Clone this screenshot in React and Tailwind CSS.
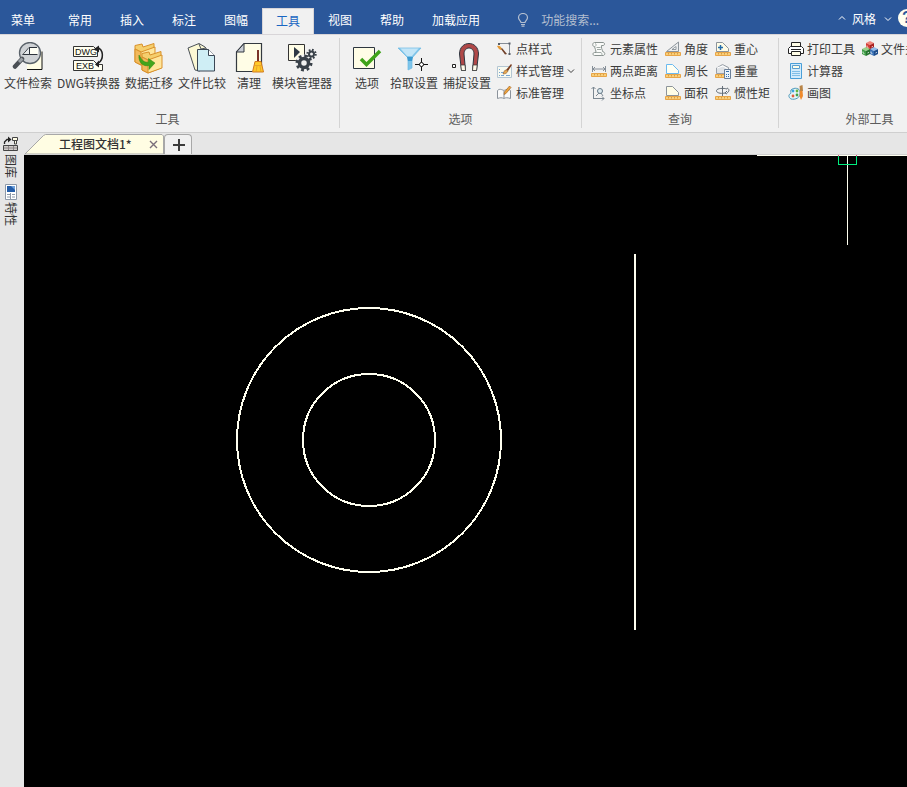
import React from "react";

/* ---------- large ribbon icons (32 x 32) ---------- */

function Icon32({ children }) {
  return (
    <svg width="32" height="32" viewBox="0 0 32 32" fill="none" aria-hidden="true">
      {children}
    </svg>
  );
}

const Folder = ({ x, y }) => (
  <g transform={`translate(${x} ${y})`}>
    <path d="M1 6 1 2.500 8 1 9 4 20 0.500 20 17 7 22 1 19Z" fill="#f5cf6d" stroke="#d9912b" />
    <path d="M1 6 7 9 21 4 21 17 7 22" fill="#ffe69b" stroke="#d9912b" />
    <path d="M1 6 7 9 7 22 1 19Z" fill="#f2b95c" stroke="#d9912b" />
  </g>
);

const SearchFile = () => (
  <Icon32>
    <path d="M15 9h15v18H15z" fill="#fffde6" />
    <path d="M30 9.500v18H15" stroke="#111" />
    <circle cx="18" cy="11" r="10.500" fill="#cfd2d5" stroke="#5a626a" strokeWidth="1.300" />
    <path d="M11 12.500 17 5.500h9v7Z" fill="#fffff5" />
    <path d="M10.500 12.500h15M11 12.500 17 5.500h8" stroke="#2d333b" />
    <path d="M17.500 5.500v7h-6" fill="#e6e9ec" stroke="#2d333b" />
    <path d="M10 17 3 24.500" stroke="#4a4f55" strokeWidth="4.500" strokeLinecap="round" />
    <path d="M10.500 16.500 7 20" stroke="#9ba0a6" strokeWidth="3" />
  </Icon32>
);

const Convert = () => (
  <Icon32>
    <path d="M1.500 4.500h20l4 4v6h-24zM1.500 18.500h20l4 4h5v6h-29z" fill="#fffff0" stroke="#333" />
    <text x="3" y="13" fontSize="9" fontFamily="Liberation Sans, sans-serif" fill="#111">DWG</text>
    <text x="4" y="27" fontSize="9" fontFamily="Liberation Sans, sans-serif" fill="#111">EXB</text>
    <path d="M25 5.500c7 2 7 12 1 16" stroke="#222" strokeWidth="1.500" />
    <path d="M22 7l5-3.500v7zM23 22.500l4-4v7z" fill="#222" />
  </Icon32>
);

const Migrate = () => (
  <Icon32>
    <Folder x={1} y={1} />
    <Folder x={8} y={9} />
    <path d="M6 13c-1 8 5 12 10 10.500v4l6-6.500-6.500-4.500v3.500c-4 1-7-2-9.500-7z" fill="#43a51b" stroke="#2f8410" strokeWidth=".5" />
  </Icon32>
);

const Compare = () => (
  <Icon32>
    <path d="M2 6 13 1.500 19 5l3 4-8 20-5-1Z" fill="#fbf8d4" stroke="#4a5158" />
    <path d="m13 2 2 5 5-1" stroke="#4a5158" />
    <path d="M11.500 7.500h11l6 6v15.500h-17z" fill="#cfeef5" stroke="#3b4654" />
    <path d="M22.500 7.500v6h6" fill="#fff" stroke="#3b4654" />
  </Icon32>
);

const Clean = () => (
  <Icon32>
    <path d="M3.500 10 11 1.500h17.500v28h-25Z" fill="#fffde6" stroke="#333940" strokeWidth="1.200" />
    <path d="M11 1.500V10H3.500Z" fill="#c8ccd4" stroke="#333940" />
    <path d="M25 8v12" stroke="#7a3329" strokeWidth="2" />
    <path d="M22 19.500h6l2.500 10.500h-11Z" fill="#ffc928" stroke="#d27a1c" />
    <path d="M21 23.500h8M24 24l-1 6M27 24l1 6" stroke="#e0962a" strokeWidth=".7" />
  </Icon32>
);

const Modules = () => (
  <Icon32>
    <path d="M2.500 2.500h16v16h-16z" fill="#fffde6" stroke="#333" />
    <path d="m8 5 6 5-6 6z" fill="#2f3944" />
    <circle cx="18" cy="21" r="8.500" fill="#f1f1f1" />
    <circle cx="18" cy="21" r="7" stroke="#394149" strokeWidth="3" strokeDasharray="2.750 2.750" />
    <circle cx="18" cy="21" r="4.500" stroke="#394149" strokeWidth="3.500" />
    <circle cx="25.500" cy="12" r="4.200" stroke="#394149" strokeWidth="2" strokeDasharray="1.650 1.650" />
    <circle cx="25.500" cy="12" r="2.500" fill="#f1f1f1" stroke="#394149" strokeWidth="2" />
  </Icon32>
);

const Options = () => (
  <Icon32>
    <path d="M2.500 5.500h21v21h-21z" fill="#fffde6" stroke="#2d3640" />
    <path d="m10 17 5.500 5.500L29 9" stroke="#3fa31a" strokeWidth="3.500" />
  </Icon32>
);

const Pick = () => (
  <Icon32>
    <path d="M0 6h23l-9 10v10l-4 2V16Z" fill="#7fc5ea" />
    <path d="M2 6h19l-7 8h-5Z" fill="#c3e5f7" />
    <path d="M0 6h23l-9 10v10l-4 2V16Z" stroke="#6bb9e4" strokeWidth=".7" />
    <path d="M9 15h6l-1 4h-4z" fill="#3c9ad0" />
    <path d="M23.500 16v5m0 3v5M17 22.500h5m3 0h5" stroke="#111" />
    <circle cx="23.500" cy="22.500" r="2" fill="#fff" stroke="#111" />
  </Icon32>
);

const Snap = () => (
  <Icon32>
    <path d="M1.500 22.500h3v3h-3z" fill="#fff" stroke="#222" />
    <path d="M10.500 28.500 8.500 12c0-14 19-14 19 0l-2 16.500h-4L23 12c0-8-10-8-10 0l1.500 16.500Z" fill="#b04848" stroke="#2d3640" />
    <path d="M9.800 23h4.200l.5 5.500h-4zM22 23h4.200l-.7 5.500h-4z" fill="#fff8e8" stroke="#333" strokeWidth=".7" />
  </Icon32>
);

/* ---------- small ribbon icons (16 x 16) ---------- */

function Icon16({ children }) {
  return (
    <svg className="shrink-0" width="16" height="16" viewBox="0 0 16 16" fill="none" aria-hidden="true">
      {children}
    </svg>
  );
}

const Ruler = ({ y = 12 }) => (
  <>
    <path d={`M.5 ${y + 0.5}h15v3H.5z`} fill="#f9cf7a" stroke="#e8a547" />
    <path d={`M3.500 ${y + 1}v1.500m3-1.500v1.500m3-1.500v1.500m3-1.500v1.500`} stroke="#cf9137" strokeWidth=".8" />
  </>
);

const Brush = () => (
  <>
    <path d="m14 1-5 6 2 1 4-6z" fill="#7b3f22" />
    <path d="M9 7c-2 0-2 2-3 4 3 0 4-1 5-3z" fill="#e8a84e" stroke="#80502a" strokeWidth=".5" />
  </>
);

const PointStyle = () => (
  <Icon16>
    <path d="M2 2.500h11M12.500 3v11" stroke="#858c96" />
    <path d="M1 2h2v2H1zM11.500 1.500h2v2h-2zM11.500 12h2v2h-2z" fill="#555d68" />
    <path d="M0 5c3-1 4 1 5 3L3.500 9C2 8 1 7 0 5Z" fill="#e69a35" />
    <path d="m4 8 1-1 5 6-2 .5z" fill="#71402a" />
  </Icon16>
);

const StyleManage = () => (
  <Icon16>
    <path d="M.5 3.500h14v11H.5z" fill="#f8faf0" stroke="#b4c6d3" />
    <path d="M2 6.500h1M2 9.500h1M2 12.500h1M4 9.500h3M4 12.500h3M9 12.500h4" stroke="#79a5d3" />
    <Brush />
  </Icon16>
);

const StandardManage = () => (
  <Icon16>
    <path d="M.5 5.500c2-2 4-1 6.500 0 2-1 4-2 6.500 0v8c-3-1-5-1-6.500 0-2-1-4-1-6.500 0Z" fill="#fafafa" stroke="#8b929b" />
    <path d="M7 6v7" stroke="#8b929b" />
    <path d="m12.500 1 1.500 1.500-5 6-2 1 .5-2.500Z" fill="#f0a53b" stroke="#9a5a1d" strokeWidth=".6" />
  </Icon16>
);

const Scroll = () => (
  <Icon16>
    <path d="M3.500 1.500h8.500c2 0 2 3 0 3h-1.500c-.5 2 .5 4 1.500 6.500h.500c2 .5 1.500 3.500-.5 3.500h-8.500c-2 0-2-3 0-3h1.500c0-2-1-4-1.500-6h-.500c-2-.5-1.500-4 .500-4Z" fill="#fafbf9" stroke="#89928f" />
    <path d="M3.500 5.500c2 0 2-3 .5-3M5 11.500h5c1.500 1 1 2 .5 3M5.500 6.500h4M6 8.500h4" stroke="#a1aaa6" />
  </Icon16>
);

const Distance = () => (
  <Icon16>
    <path d="M1.500 3v6m13-6v6M2 6h12M4 4 2 6l2 2m8-4 2 2-2 2" stroke="#7b858f" strokeWidth=".9" />
    <Ruler y={10} />
  </Icon16>
);

const Coordinate = () => (
  <Icon16>
    <path d="M2.500 14V2m-2 2 2-2 2 2M2 13.500h11m-2-2 2 2-2 2" stroke="#7b8791" />
    <path d="m5 11 4-4m1 1 2 3" stroke="#7b8791" />
    <circle cx="9" cy="6" r="2.500" fill="#dce9ef" stroke="#657886" />
  </Icon16>
);

const Angle = () => (
  <Icon16>
    <path d="M1.500 10.500 13.500 1v9.500Z" fill="#eceeef" stroke="#8c949b" />
    <path d="M7 8.500 11 5.500v3z" fill="#fff" stroke="#7c858d" strokeWidth=".8" />
    <Ruler y={11} />
  </Icon16>
);

const Perimeter = () => (
  <Icon16>
    <path d="M1.500 10.500v-9h6l6 6v3Z" fill="#fffff3" stroke="#6bbaf0" />
    <Ruler y={11} />
  </Icon16>
);

const Area = () => (
  <Icon16>
    <path d="M1.500 10.500v-9h6l6 6v3Z" fill="#fffde6" stroke="#8c949b" />
    <Ruler y={11} />
  </Icon16>
);

const Centroid = () => (
  <Icon16>
    <path d="M1.500 10.500v-9h6l6 6v3Z" fill="#fffde6" stroke="#8c949b" />
    <path d="M5.500 4v5M3 6.500h5" stroke="#246caa" strokeWidth="1.500" />
    <Ruler y={11} />
  </Icon16>
);

const Weight = () => (
  <Icon16>
    <path d="m1.500 5 6-3.500 6 3v6h-12Z" fill="#e0e3e6" stroke="#9aa1a8" />
    <path d="m2 5 6-2 5 3" stroke="#fff" />
    <Ruler y={11} />
    <path d="M9.500 6.500h6v9h-6z" fill="#eaf4fc" stroke="#6b7f98" />
    <path d="M11 8.500h3M11 11.500h1m1 0h1m-3 2h1m1 0h1" stroke="#3972ab" />
  </Icon16>
);

const Inertia = () => (
  <Icon16>
    <path d="M7.500 1v10" stroke="#69727b" />
    <path d="M10 8c-5 1-9-.5-8.500-2.500C2 3 9 3 12 4m-2 4 2-2m-2 2 2 1m0-6c3 1 2 4 0 5" stroke="#606a73" />
    <Ruler y={11} />
  </Icon16>
);

const Printer = () => (
  <Icon16>
    <path d="M3.500 6V1.500h9V6" fill="#fffde6" stroke="#222" />
    <path d="M2.500 5.500h11l2 2v5H.5v-5z" fill="#fff" stroke="#222" strokeLinejoin="round" />
    <path d="M3 8.500h10" stroke="#222" />
    <path d="M3.500 10.500h9v4h-9z" fill="#fffde6" stroke="#222" />
  </Icon16>
);

const Calculator = () => (
  <Icon16>
    <path d="M2.500.5h11v15h-11z" fill="#d2ebfc" stroke="#4a9fd8" />
    <path d="M4.500 2.500h7v3h-7z" fill="#fffde9" stroke="#5b9fce" />
    <path d="M4.500 8.500h7M4.500 10.500h7M4.500 12.500h7" stroke="#2f91d2" strokeDasharray="1 1" />
  </Icon16>
);

const Paint = () => (
  <Icon16>
    <path d="M3 5c3-3 9-2 9 2 1 6-5 8-9 7-2-1-3-4-1-5 2-1 0-2 1-4Z" fill="#e7f4f8" stroke="#4d99b9" />
    <circle cx="5" cy="6" r="1.400" fill="#3aa3e0" />
    <circle cx="9" cy="6" r="1.400" fill="#66b43d" />
    <circle cx="5" cy="11" r="1.400" fill="#e05c3c" />
    <circle cx="9" cy="10" r="1.400" fill="#3fa34d" />
    <path d="m11.500 1 3-1 .5 6h-3z" fill="#b98548" />
    <path d="M12 6h2.500l.5 5-2 4-1.500-4z" fill="#ef8b2c" />
  </Icon16>
);

const Cube = ({ x, y, top, left, right }) => (
  <g transform={`translate(${x} ${y})`}>
    <path d="m4 0 4 2-4 2-4-2z" fill={top} />
    <path d="m0 2 4 2v5L0 7z" fill={left} />
    <path d="m8 2-4 2v5l4-2z" fill={right} />
    <path d="M1 4.500v1.500l1.500.700M5.500 6l1.500-.700" stroke="#fff" strokeWidth=".7" />
  </g>
);

const Cubes = () => (
  <Icon16>
    <Cube x={4} y={0} top="#f2867c" left="#d23b34" right="#ab201f" />
    <Cube x={0} y={6} top="#9bd28a" left="#3e9b45" right="#24722e" />
    <Cube x={8} y={6} top="#92bdea" left="#376fb3" right="#1d4c8b" />
  </Icon16>
);

/* ---------- pieces of the ribbon ---------- */

function BigButton({ icon: Icon, label }) {
  return (
    <button type="button" className="flex h-[50px] min-w-10 shrink-0 flex-col items-center px-[2px]">
      <Icon />
      <span className="h-[18px] leading-[18px]">{label}</span>
    </button>
  );
}

function SmallButton({ icon: Icon, label, menu }) {
  return (
    <button type="button" className="flex h-[22px] shrink-0 items-center gap-[3px] whitespace-nowrap">
      <Icon />
      <span>{label}</span>
      {menu && <Chevron />}
    </button>
  );
}

function Chevron({ up }) {
  return (
    <svg width="8" height="8" viewBox="0 0 8 8" fill="none" stroke="currentColor" aria-hidden="true">
      <path d={up ? "M1 5.500 4 2.500 7 5.500" : "M1 2.500 4 5.500 7 2.500"} />
    </svg>
  );
}

function Group({ title, className = "", children }) {
  return (
    <section className={`flex shrink-0 flex-col border-r border-[#d4d4d4] ${className}`}>
      <div className="flex h-[72px]">{children}</div>
      <h2 className="text-center leading-[18px] text-[#5c5c5c]">{title}</h2>
    </section>
  );
}

const Column = ({ children }) => <div className="flex flex-col">{children}</div>;

const tabs = ["常用", "插入", "标注", "图幅", "工具", "视图", "帮助", "加载应用"];

function TitleBar() {
  return (
    <header className="flex h-[35px] shrink-0 items-end overflow-hidden border-b border-[#d8d5d8] bg-[#2b579a] text-white">
      <button type="button" className="h-[26px] w-[54px] shrink-0 pr-2 pb-[2px]">菜单</button>
      <nav className="flex shrink-0">
        {tabs.map((tab) => (
          <button
            key={tab}
            type="button"
            className={
              tab === "工具"
                ? "-mb-px h-[27px] border-x border-t border-[#d8d5d8] bg-[#f1f1f1] px-[13px] pb-[3px] text-[#1a66c2]"
                : "h-[26px] px-[14px] pb-[2px]"
            }
          >
            {tab}
          </button>
        ))}
      </nav>
      <label className="ml-[23px] flex h-[26px] items-center gap-3 pb-[2px]">
        <svg width="12" height="14" viewBox="0 0 12 14" fill="none" stroke="#b4bfd0" strokeWidth="1.200" aria-hidden="true">
          <path d="M4 9.500C4 8 1.500 7 1.500 4.800a4.500 4.300 0 0 1 9 0C10.500 7 8 8 8 9.500ZM4 11.500h4M4.500 13.200h3" />
        </svg>
        <input aria-label="功能搜索" placeholder="功能搜索..." className="w-24 bg-transparent outline-none placeholder:text-[#b4bfd0]" />
      </label>
      <div className="-mr-[9px] ml-auto flex h-[30px] shrink-0 items-center gap-[6px] pb-[2px]">
        <button type="button" aria-label="收起功能区"><Chevron up /></button>
        <button type="button" className="flex items-center gap-2 pt-[2px]">
          风格
          <Chevron />
        </button>
        <button type="button" aria-label="帮助信息" className="size-[18px] rounded-full bg-[#fffff0] font-['Liberation_Sans',sans-serif] text-base leading-[18px] font-bold text-[#2b579a]">
          ?
        </button>
      </div>
    </header>
  );
}

function Ribbon() {
  return (
    <div className="flex h-[98px] shrink-0 overflow-hidden border-b border-[#cfcfcf] bg-[#f1f1f1] pt-[3px] pb-1 text-[#3c3c3c]">
      <Group title="工具" className="w-[340px] pr-1">
        <div className="flex gap-px pt-1 pl-[2px]">
          <BigButton icon={SearchFile} label="文件检索" />
          <BigButton icon={Convert} label="DWG转换器" />
          <BigButton icon={Migrate} label="数据迁移" />
          <BigButton icon={Compare} label="文件比较" />
          <BigButton icon={Clean} label="清理" />
          <BigButton icon={Modules} label="模块管理器" />
        </div>
      </Group>
      <Group title="选项" className="w-[242px]">
        <div className="flex gap-px pt-1 pl-[7px]">
          <BigButton icon={Options} label="选项" />
          <BigButton icon={Pick} label="拾取设置" />
          <BigButton icon={Snap} label="捕捉设置" />
        </div>
        <div className="pl-1">
          <Column>
            <SmallButton icon={PointStyle} label="点样式" />
            <SmallButton icon={StyleManage} label="样式管理" menu />
            <SmallButton icon={StandardManage} label="标准管理" />
          </Column>
        </div>
      </Group>
      <Group title="查询" className="w-[197px]">
        <div className="flex gap-[7px] pl-[9px]">
          <Column>
            <SmallButton icon={Scroll} label="元素属性" />
            <SmallButton icon={Distance} label="两点距离" />
            <SmallButton icon={Coordinate} label="坐标点" />
          </Column>
          <Column>
            <SmallButton icon={Angle} label="角度" />
            <SmallButton icon={Perimeter} label="周长" />
            <SmallButton icon={Area} label="面积" />
          </Column>
          <Column>
            <SmallButton icon={Centroid} label="重心" />
            <SmallButton icon={Weight} label="重量" />
            <SmallButton icon={Inertia} label="惯性矩" />
          </Column>
        </div>
      </Group>
      <Group title="外部工具" className="w-[182px]">
        <div className="flex gap-[7px] pl-[9px]">
          <Column>
            <SmallButton icon={Printer} label="打印工具" />
            <SmallButton icon={Calculator} label="计算器" />
            <SmallButton icon={Paint} label="画图" />
          </Column>
          <Column>
            <SmallButton icon={Cubes} label="文件关联" />
          </Column>
        </div>
      </Group>
    </div>
  );
}

/* ---------- workspace ---------- */

function SideBar() {
  const item = "flex flex-col items-center gap-[2px]";
  const text = "[writing-mode:vertical-rl] [text-orientation:sideways] leading-4";
  return (
    <aside className="flex w-6 shrink-0 flex-col items-center gap-[6px] bg-[#e6e6e6] pt-[3px] pr-[2px] text-[#333]">
      <button type="button" className={item}>
        <svg width="16" height="16" viewBox="0 0 16 16" fill="none" aria-hidden="true">
          <path d="M1.500 8V6L4 3.500h3" stroke="#222" strokeWidth="1.300" />
          <path d="M5 .5 8.500 3.500 5 6.500z" fill="#222" />
          <path d="M9.500 1.500h5v3h-5zM11.500 4.500h2V8h-2z" fill="#fffde6" stroke="#444" />
          <path d="M.5 9.500h14v5H.5z" fill="#cfcbc8" stroke="#444" />
          <path d="M1 12h13M5.500 10v4m5-4v4" stroke="#8a8486" />
        </svg>
        <span className={text}>图库</span>
      </button>
      <button type="button" className={item}>
        <svg width="12" height="16" viewBox="0 0 12 16" fill="none" aria-hidden="true">
          <path d="M.5.5h11v15H.5z" fill="#fff" stroke="#8d99a8" />
          <path d="M2 2h8v6H2z" fill="#245da8" />
          <path d="M6 2h4v4z" fill="#6ea2dc" />
          <path d="M2 10.500h3m2 0h3M2 13h3m2 0h3M5.500 9v6" stroke="#8d99a8" />
        </svg>
        <span className={text}>特性</span>
      </button>
    </aside>
  );
}

function DocumentTabs() {
  return (
    <div className="flex h-[22px] shrink-0 items-end border-b border-[#d0d0d0] bg-[#e6e6e6] text-[#333]">
      <div className="relative flex h-5 w-[140px] items-center justify-between pr-[6px] pl-[35px]">
        <svg className="absolute inset-0" width="140" height="20" viewBox="0 0 140 20" aria-hidden="true">
          <path d="M1 20 19.500 1.500 21.500.5H138l1.500 1.500v18Z" fill="#fffde3" stroke="#a8a8a8" />
        </svg>
        <button type="button" className="relative font-medium">工程图文档1*</button>
        <button type="button" aria-label="关闭文档" className="relative">
          <svg width="9" height="9" viewBox="0 0 9 9" stroke="#7a6e7a" strokeWidth="1.400" aria-hidden="true">
            <path d="m1 1 7 7m0-7-7 7" />
          </svg>
        </button>
      </div>
      <button type="button" aria-label="新建文档" className="flex h-5 w-7 items-center justify-center rounded-t border border-b-0 border-[#a8a8a8] bg-[#f1f1f1] pl-px">
        <svg width="13" height="13" viewBox="0 0 13 13" stroke="#3c3c3c" strokeWidth="2" shapeRendering="crispEdges" aria-hidden="true">
          <path d="M7 1v12M1 7h12" />
        </svg>
      </button>
    </div>
  );
}

function Drawing() {
  return (
    <main className="min-h-0 flex-1 overflow-hidden bg-black">
      <svg className="block size-full" fill="none" stroke="#fffff0" shapeRendering="crispEdges" role="img" aria-label="图纸">
        <circle cx="345" cy="285" r="132" strokeWidth="2" />
        <circle cx="345" cy="285" r="66" strokeWidth="2" />
        <path d="M611 99v376" strokeWidth="2" />
        <path d="M733 .5h4000M823.500 0v90" />
        <path d="M814.500 1v8.500h18V1" stroke="#00ed7e" />
        <path d="M814 .5h1M832 .5h1" stroke="#f03080" />
      </svg>
    </main>
  );
}

export default function App() {
  return (
    <div className="flex h-screen flex-col overflow-hidden bg-[#e6e6e6] font-['Noto_Sans_CJK_SC',sans-serif] text-xs whitespace-nowrap">
      <TitleBar />
      <Ribbon />
      <div className="flex min-h-0 flex-1">
        <SideBar />
        <div className="flex min-w-0 flex-1 flex-col">
          <DocumentTabs />
          <Drawing />
        </div>
      </div>
    </div>
  );
}
